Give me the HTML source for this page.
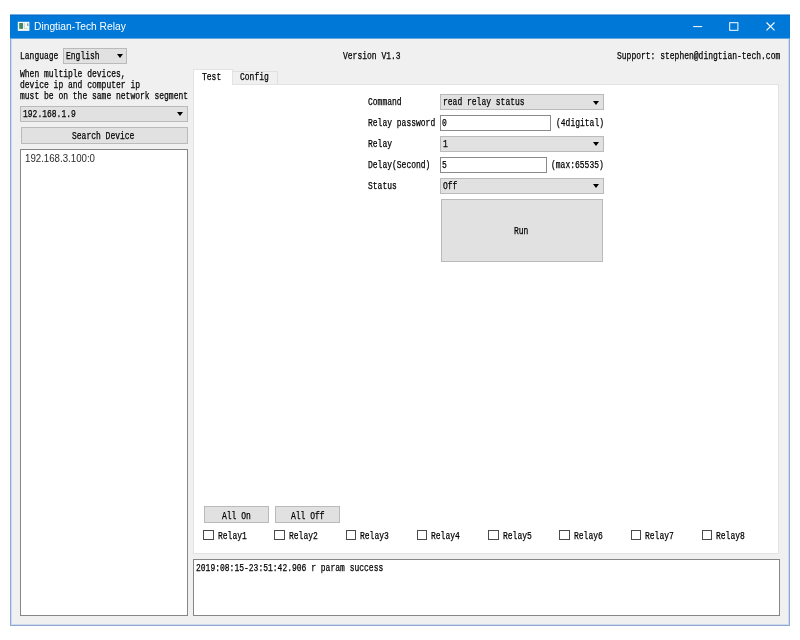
<!DOCTYPE html>
<html lang="en">
<head>
<meta charset="utf-8">
<title>Dingtian-Tech Relay</title>
<style>
*{box-sizing:border-box;margin:0;padding:0}
html,body{width:800px;height:640px;overflow:hidden;background:#fff}
body{position:relative;font-family:"Liberation Mono",monospace;color:#000}
.a{position:absolute}
/* window */
#win{left:10px;top:14px;width:780px;height:612px;background:#f0f0f0;border:1px solid #8fa9d3;border-top:none}
#win:after{content:"";position:absolute;left:0;top:0;right:0;bottom:0;border:1px solid #cdd9ec;border-top:none;pointer-events:none}
#tb{left:10px;top:14px;width:780px;height:25px;background:linear-gradient(to bottom,#6fb1e8 0,#6fb1e8 1px,#0a6cc6 1px,#0a6cc6 2px,#0078d7 2px,#0078d7 24px,#5fa8e2 24px,#5fa8e2 25px)}
#title{left:33.8px;top:19px;filter:grayscale(1);transform:scaleX(.95);transform-origin:0 0;font:10.8px/14px "Liberation Sans",sans-serif;color:#fff;white-space:pre}
/* simsun-like text */
.m{position:absolute;font:10px/12px "Liberation Mono",monospace;white-space:pre;transform:scaleX(.8);transform-origin:0 0;color:#000;-webkit-text-stroke:.25px #000;filter:grayscale(1)}
.s{position:absolute;font:10.2px/12px "Liberation Sans",sans-serif;white-space:pre;color:#2a2a2a;transform:scaleX(.95);transform-origin:0 0;filter:grayscale(1)}
/* widgets */
.cb,.bt{position:absolute;background:#e1e1e1;border:1px solid #bababa}
.in{position:absolute;background:#fff;border:1px solid #8a8a8a}
.box{position:absolute;background:#fff;border:1px solid #868686}
.ar{position:absolute;width:0;height:0;border-left:3.2px solid transparent;border-right:3.2px solid transparent;border-top:4px solid #000}
.ck{position:absolute;width:10.5px;height:10.5px;background:#fff;border:1px solid #4a4a4a}
</style>
</head>
<body>
<div id="win" class="a"></div>
<div id="tb" class="a"></div>
<!-- title bar -->
<svg class="a" style="left:17px;top:21px" width="14" height="11" viewBox="0 0 14 11">
  <rect x="0.8" y="0.8" width="11.6" height="9.1" fill="#f4f8f6"/>
  <rect x="2.2" y="2" width="3.8" height="5.9" fill="#3f8a63"/>
  <rect x="6.8" y="2.2" width="1" height="5" fill="#c9d3cf"/>
  <rect x="10" y="2.4" width="1.4" height="2.6" fill="#8c9ab8"/>
  <rect x="7" y="7.2" width="3.6" height="0.7" fill="#d9c9a8"/>
</svg>
<div id="title" class="a">Dingtian-Tech Relay</div>
<svg class="a" style="left:690px;top:18px" width="90" height="16" viewBox="0 0 90 16">
  <g stroke="#fff" stroke-width="1" fill="none">
    <line x1="3.2" y1="8.6" x2="12.2" y2="8.6"/>
    <rect x="39.7" y="4.7" width="8.2" height="7.6"/>
    <path d="M76.5 4.5 L84.5 12.3 M84.5 4.5 L76.5 12.3" stroke-width="1.1"/>
  </g>
</svg>

<!-- top row -->
<span class="m" style="left:20px;top:51px">Language</span>
<div class="cb" style="left:63px;top:48px;width:64px;height:15.5px"></div>
<span class="m" style="left:66.2px;top:51px">English</span>
<div class="ar" style="left:116.5px;top:54.3px"></div>
<span class="m" style="left:343px;top:51px">Version V1.3</span>
<span class="m" style="left:616.6px;top:51px">Support: stephen@dingtian-tech.com</span>

<!-- left panel -->
<span class="m" style="left:20px;top:69px">When multiple devices,</span>
<span class="m" style="left:20px;top:80px">device ip and computer ip</span>
<span class="m" style="left:20px;top:91px">must be on the same network segment</span>
<div class="cb" style="left:20px;top:105.6px;width:168px;height:16px"></div>
<span class="m" style="left:23.4px;top:109px">192.168.1.9</span>
<div class="ar" style="left:177.4px;top:111.8px"></div>
<div class="bt" style="left:21px;top:127.4px;width:166.5px;height:16.4px"></div>
<span class="m" style="left:72.4px;top:131px">Search Device</span>
<div class="box" style="left:20px;top:149.2px;width:168px;height:466.6px"></div>
<span class="s" style="left:24.6px;top:152.6px">192.168.3.100:0</span>

<!-- tabs -->
<div class="a" style="left:232px;top:71px;width:46px;height:14px;background:#f0f0f0;border:1px solid #dfdfdf;border-bottom:none"></div>
<div class="a" style="left:193px;top:84px;width:585.5px;height:469.5px;background:#fff;border:1px solid #e3e3e3"></div>
<div class="a" style="left:193px;top:69.4px;width:39.6px;height:16px;background:#fff;border:1px solid #e3e3e3;border-bottom:none"></div>
<span class="m" style="left:202.2px;top:72px">Test</span>
<span class="m" style="left:240.4px;top:72px">Config</span>

<!-- form -->
<span class="m" style="left:367.7px;top:97px">Command</span>
<div class="cb" style="left:440px;top:94.2px;width:163.6px;height:16px"></div>
<span class="m" style="left:442.7px;top:97px">read relay status</span>
<div class="ar" style="left:593.4px;top:100.5px"></div>

<span class="m" style="left:367.7px;top:118px">Relay password</span>
<div class="in" style="left:440px;top:115.2px;width:110.8px;height:15.6px"></div>
<span class="m" style="left:441.8px;top:118px">0</span>
<span class="m" style="left:555.6px;top:118px">(4digital)</span>

<span class="m" style="left:367.7px;top:139px">Relay</span>
<div class="cb" style="left:440px;top:136px;width:163.6px;height:15.8px"></div>
<span class="m" style="left:443.4px;top:139px">1</span>
<div class="ar" style="left:593.4px;top:142.2px"></div>

<span class="m" style="left:367.7px;top:160px">Delay(Second)</span>
<div class="in" style="left:440px;top:156.8px;width:106.5px;height:15.8px"></div>
<span class="m" style="left:441.8px;top:160px">5</span>
<span class="m" style="left:551px;top:160px">(max:65535)</span>

<span class="m" style="left:367.7px;top:181px">Status</span>
<div class="cb" style="left:440px;top:177.6px;width:163.6px;height:16px"></div>
<span class="m" style="left:442.7px;top:181px">Off</span>
<div class="ar" style="left:593.4px;top:183.8px"></div>

<div class="bt" style="left:440.8px;top:198.8px;width:162.2px;height:63px"></div>
<span class="m" style="left:514.4px;top:226px">Run</span>

<!-- bottom buttons -->
<div class="bt" style="left:204px;top:506.3px;width:65px;height:16.6px"></div>
<span class="m" style="left:221.6px;top:511px">All On</span>
<div class="bt" style="left:275px;top:506.3px;width:65px;height:16.6px"></div>
<span class="m" style="left:290.6px;top:511px">All Off</span>

<div class="ck" style="left:203.1px;top:529.5px"></div><span class="m" style="left:217.5px;top:531px">Relay1</span>
<div class="ck" style="left:274.4px;top:529.5px"></div><span class="m" style="left:288.8px;top:531px">Relay2</span>
<div class="ck" style="left:345.6px;top:529.5px"></div><span class="m" style="left:360px;top:531px">Relay3</span>
<div class="ck" style="left:416.9px;top:529.5px"></div><span class="m" style="left:431.3px;top:531px">Relay4</span>
<div class="ck" style="left:488.1px;top:529.5px"></div><span class="m" style="left:502.5px;top:531px">Relay5</span>
<div class="ck" style="left:559.4px;top:529.5px"></div><span class="m" style="left:573.8px;top:531px">Relay6</span>
<div class="ck" style="left:630.6px;top:529.5px"></div><span class="m" style="left:645px;top:531px">Relay7</span>
<div class="ck" style="left:701.8px;top:529.5px"></div><span class="m" style="left:716.2px;top:531px">Relay8</span>

<!-- log -->
<div class="box" style="left:193px;top:559.2px;width:586.8px;height:56.6px"></div>
<span class="m" style="left:196px;top:563px">2019:08:15-23:51:42.906 r param success</span>
</body>
</html>
